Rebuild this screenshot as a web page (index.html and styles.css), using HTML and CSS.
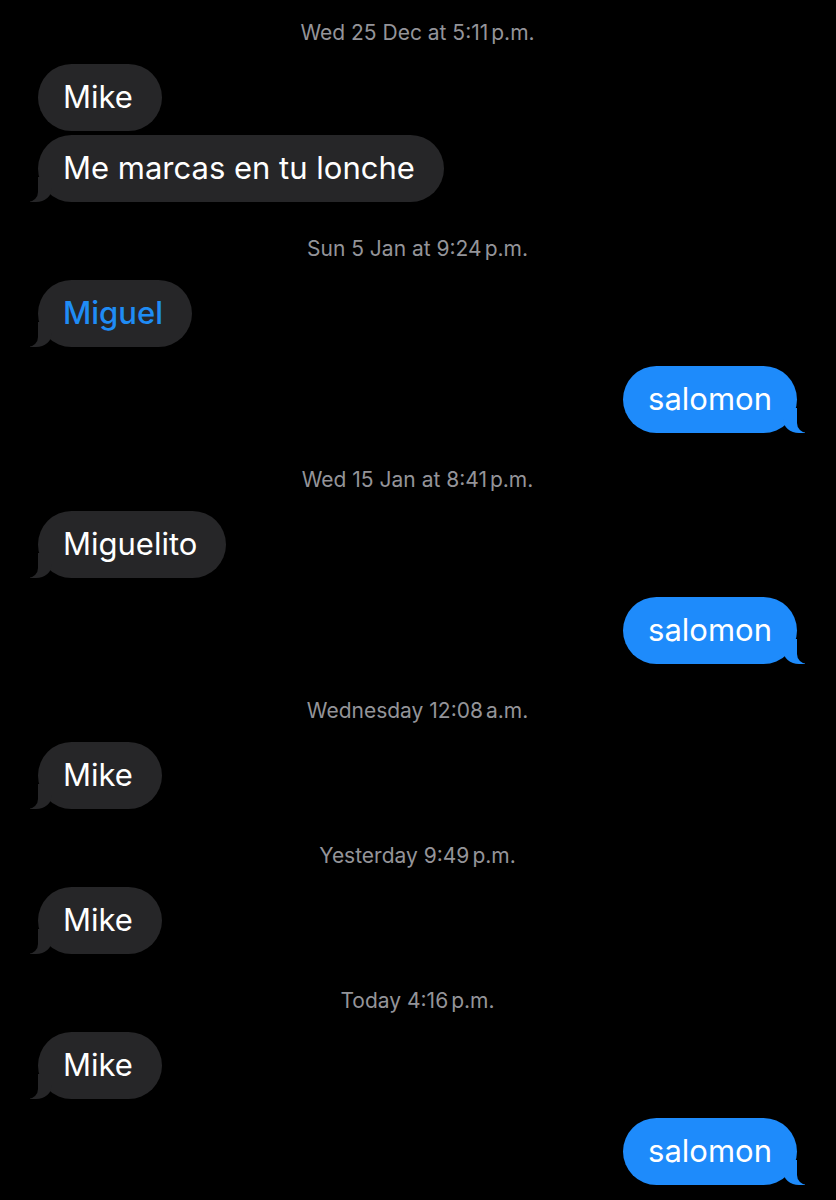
FILE: index.html
```html
<!DOCTYPE html>
<html lang="es">
<head>
  <meta charset="UTF-8">
  <title>Mensajes</title>
  <link rel="stylesheet" href="styles.css">
</head>
<body>

  <main class="thread">

    <div class="stamp"><span class="day">Wed 25 Dec at</span> 5:11<span class="ampm">p.m.</span></div>
    <div class="row in"><div class="bubble">Mike</div></div>
    <div class="row in same"><div class="bubble tail">Me marcas en tu lonche</div></div>

    <div class="stamp"><span class="day">Sun 5 Jan at</span> 9:24<span class="ampm">p.m.</span></div>
    <div class="row in"><div class="bubble tail link">Miguel</div></div>
    <div class="row out"><div class="bubble tail">salomon</div></div>

    <div class="stamp"><span class="day">Wed 15 Jan at</span> 8:41<span class="ampm">p.m.</span></div>
    <div class="row in"><div class="bubble tail">Miguelito</div></div>
    <div class="row out"><div class="bubble tail">salomon</div></div>

    <div class="stamp"><span class="day">Wednesday</span> 12:08<span class="ampm">a.m.</span></div>
    <div class="row in"><div class="bubble tail">Mike</div></div>

    <div class="stamp"><span class="day">Yesterday</span> 9:49<span class="ampm">p.m.</span></div>
    <div class="row in"><div class="bubble tail">Mike</div></div>

    <div class="stamp"><span class="day">Today</span> 4:16<span class="ampm">p.m.</span></div>
    <div class="row in"><div class="bubble tail">Mike</div></div>
    <div class="row out"><div class="bubble tail">salomon</div></div>

  </main>

</body>
</html>
```

FILE: styles.css
```css
body {
  margin: 0;
  background: #000;
  font-family: Inter, "Noto Sans", sans-serif;
  color: #fff;
}

.thread {
  padding: 21px 39px 0 38px;
  display: flex;
  flex-direction: column;
}

/* time separators */
.stamp {
  text-align: center;
  color: #949499;
  font-size: 21px;
  line-height: 24px;
  margin: 35px 0 19px;
}

.stamp:first-child {
  margin-top: 0;
}

.ampm {
  margin-left: 3px;
}

.row {
  display: flex;
  margin-top: 19px;
}

.stamp + .row {
  margin-top: 0;
}

.row.same {
  margin-top: 4px;
}

.row.out {
  justify-content: flex-end;
}

.bubble {
  position: relative;
  font-size: 31px;
  line-height: 38px;
  padding: 14px 25px 15px;
  border-radius: 34px;
}

.in .bubble {
  background: #262628;
  padding-right: 29px;
}

.out .bubble {
  background: #1e8bfb;
}

.bubble.link {
  color: #1f8cf5;
  font-weight: 500;
}

/* the little tail under the last bubble */
.bubble.tail::before,
.bubble.tail::after {
  content: "";
  position: absolute;
  bottom: 0;
  height: 25px;
}

.in .bubble.tail::before {
  left: -8px;
  width: 22px;
  background: #262628;
  border-bottom-right-radius: 16px 14px;
}

.in .bubble.tail::after {
  left: -26px;
  width: 26px;
  background: #000;
  border-bottom-right-radius: 10px;
}

.out .bubble.tail::before {
  right: -8px;
  width: 22px;
  background: #1e8bfb;
  border-bottom-left-radius: 16px 14px;
}

.out .bubble.tail::after {
  right: -26px;
  width: 26px;
  background: #000;
  border-bottom-left-radius: 10px;
}
```
